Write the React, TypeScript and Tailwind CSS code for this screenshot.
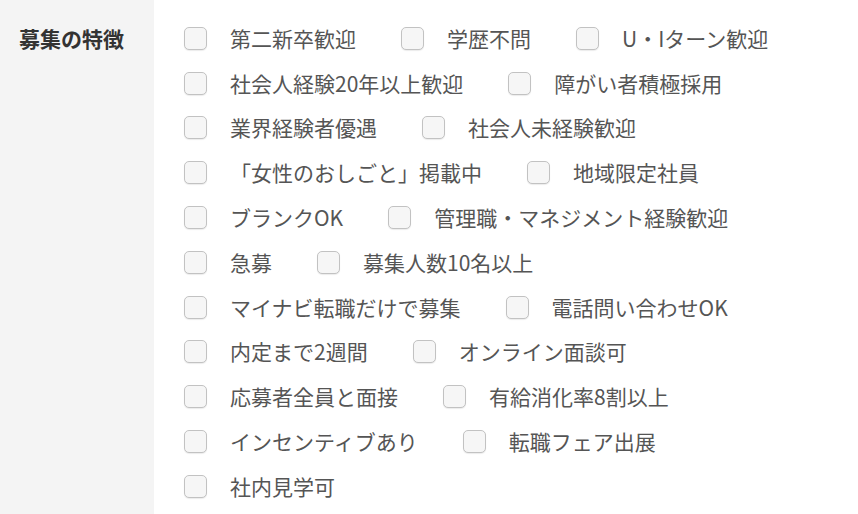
const rows: string[][] = [
  ["第二新卒歓迎", "学歴不問", "U・Iターン歓迎"],
  ["社会人経験20年以上歓迎", "障がい者積極採用"],
  ["業界経験者優遇", "社会人未経験歓迎"],
  ["「女性のおしごと」掲載中", "地域限定社員"],
  ["ブランクOK", "管理職・マネジメント経験歓迎"],
  ["急募", "募集人数10名以上"],
  ["マイナビ転職だけで募集", "電話問い合わせOK"],
  ["内定まで2週間", "オンライン面談可"],
  ["応募者全員と面接", "有給消化率8割以上"],
  ["インセンティブあり", "転職フェア出展"],
  ["社内見学可"],
];

function CheckItem({ label }: { label: string }) {
  return (
    <label className="flex items-center gap-[23px] cursor-pointer">
      <span className="shrink-0 w-[23px] h-[23px] rounded-[5px] border border-[#c2c2c2] bg-[#f6f6f6] shadow-[0_1px_1px_rgba(0,0,0,0.08)]" />
      <span className="text-[21px] leading-none text-[#555555] whitespace-nowrap">{label}</span>
    </label>
  );
}

export default function App() {
  return (
    <div
      className="flex w-[858px] h-[514px] bg-white overflow-hidden"
      style={{ fontFamily: '"Noto Sans CJK JP", "Noto Sans", sans-serif' }}
    >
      <div className="w-[154px] bg-[#f4f4f4] pt-[16px] pl-[19px]">
        <div className="h-[45px] flex items-center text-[21px] font-bold text-[#333333]">
          募集の特徴
        </div>
      </div>

      <div className="flex-1 pt-[16px] pl-[30px]">
        {rows.map((row, i) => (
          <div key={i} className="h-[44.8px] flex items-center gap-x-[45px]">
            {row.map((item) => (
              <CheckItem key={item} label={item} />
            ))}
          </div>
        ))}
      </div>
    </div>
  );
}
